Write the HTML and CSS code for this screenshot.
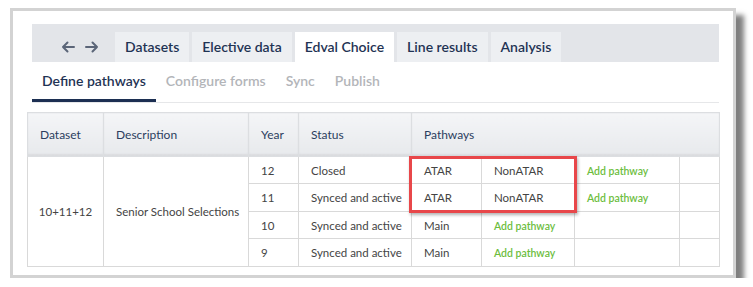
FILE: index.html
```html
<!DOCTYPE html>
<html lang="en">
<head>
    <meta charset="UTF-8">
    <meta name="viewport" content="width=device-width, initial-scale=1.0">
    <title>Edval Choice - Define pathways</title>
    <link rel="stylesheet" href="styles.css">
</head>
<body>
    <div class="frame">
        <div class="topnav">
            <div class="arrows">
                <svg width="14" height="12" viewBox="0 0 14 12"><path d="M13 6H2M6.5 1.5L2 6l4.5 4.5" /></svg>
                <svg width="14" height="12" viewBox="0 0 14 12"><path d="M1 6h11M7.5 1.5L12 6l-4.5 4.5" /></svg>
            </div>
            <div class="tab">Datasets</div>
            <div class="tab">Elective data</div>
            <div class="tab active">Edval Choice</div>
            <div class="tab">Line results</div>
            <div class="tab">Analysis</div>
        </div>

        <div class="subnav">
            <div class="subtab current">Define pathways</div>
            <div class="subtab">Configure forms</div>
            <div class="subtab">Sync</div>
            <div class="subtab">Publish</div>
        </div>

        <div class="table-wrap">
            <table class="grid">
                <colgroup>
                    <col class="c-dataset">
                    <col class="c-desc">
                    <col class="c-year">
                    <col class="c-status">
                    <col class="c-p1">
                    <col class="c-p2">
                    <col class="c-p3">
                    <col class="c-p4">
                </colgroup>
                <thead>
                    <tr>
                        <th>Dataset</th>
                        <th>Description</th>
                        <th>Year</th>
                        <th>Status</th>
                        <th colspan="4">Pathways</th>
                    </tr>
                </thead>
                <tbody>
                    <tr>
                        <td rowspan="4" class="center">10+11+12</td>
                        <td rowspan="4">Senior School Selections</td>
                        <td>12</td>
                        <td>Closed</td>
                        <td>ATAR</td>
                        <td>NonATAR</td>
                        <td><a class="add">Add pathway</a></td>
                        <td></td>
                    </tr>
                    <tr>
                        <td>11</td>
                        <td>Synced and active</td>
                        <td>ATAR</td>
                        <td>NonATAR</td>
                        <td><a class="add">Add pathway</a></td>
                        <td></td>
                    </tr>
                    <tr>
                        <td>10</td>
                        <td>Synced and active</td>
                        <td>Main</td>
                        <td><a class="add">Add pathway</a></td>
                        <td></td>
                        <td></td>
                    </tr>
                    <tr>
                        <td>9</td>
                        <td>Synced and active</td>
                        <td>Main</td>
                        <td><a class="add">Add pathway</a></td>
                        <td></td>
                        <td></td>
                    </tr>
                </tbody>
            </table>
            <div class="highlight"></div>
        </div>
    </div>
</body>
</html>
```

FILE: styles.css
```css
body {
    margin: 0;
    background-color: #fff;
    font-family: Lato, "Open Sans", sans-serif;
}
.frame {
    box-sizing: border-box;
    width: 726px;
    height: 270px;
    margin: 8px 0 0 10px;
    padding: 13px 14px 0 14px;
    border: 3px solid #d3d3d3;
    background-color: #fff;
    box-shadow: 8px 7px 5px rgba(0,0,0,0.5);
}
.topnav {
    display: flex;
    align-items: flex-end;
    height: 38px;
    margin-left: 5px;
    background-color: #e3e5e9;
}
.arrows {
    display: flex;
    align-items: center;
    gap: 10px;
    width: 54px;
    height: 30px;
    padding-left: 29px;
}
.arrows svg path {
    fill: none;
    stroke: #5b6578;
    stroke-width: 2;
    stroke-linecap: round;
    stroke-linejoin: round;
}
.tab {
    height: 30px;
    line-height: 30px;
    padding: 0 10px;
    margin-right: 3px;
    background-color: #edeff2;
    color: #1f3354;
    font-size: 14px;
    font-weight: 600;
}
.tab.active {
    background-color: #fff;
}
.subnav {
    display: flex;
    margin-left: 5px;
    border-bottom: 1px solid #e6e7e9;
}
.subtab {
    height: 37px;
    line-height: 37px;
    padding: 0 10px;
    border-bottom: 3px solid transparent;
    color: #b3b5b9;
    font-size: 14px;
    font-weight: 600;
}
.subtab.current {
    color: #1f3354;
    border-bottom-color: #1c2f52;
}
.table-wrap {
    position: relative;
    margin-top: 9px;
    width: 692px;
}
.grid {
    width: 692px;
    table-layout: fixed;
    border-collapse: collapse;
    font-size: 11.5px;
    color: #444;
}
.c-dataset { width: 76px; }
.c-desc { width: 145px; }
.c-year { width: 50px; }
.c-status { width: 113px; }
.c-p1 { width: 70px; }
.c-p2 { width: 93px; }
.c-p3 { width: 105px; }
.c-p4 { width: 40px; }
.grid th {
    height: 43px;
    padding: 0 12px;
    text-align: left;
    font-weight: 400;
    font-size: 12px;
    color: #2b3d5e;
    background: linear-gradient(#f4f5f7, #e7e9ec);
    border: 1px solid #dcdee1;
    box-shadow: inset 0 -2px 2px rgba(0,0,0,0.06);
}
.grid td {
    height: 26px;
    padding: 0 12px;
    border: 1px solid #d9d9d9;
    white-space: nowrap;
}
.grid tbody tr:nth-child(even) td {
    height: 27px;
}
.grid td.center {
    text-align: center;
    padding: 0;
}
.add {
    color: #6cbd3d;
    font-size: 10.5px;
    font-weight: 600;
}
.highlight {
    position: absolute;
    left: 382px;
    top: 44px;
    width: 168px;
    height: 57px;
    box-sizing: border-box;
    border: 3px solid #e8474a;
    box-shadow: 1px 2px 3px rgba(0,0,0,0.3);
}
```
